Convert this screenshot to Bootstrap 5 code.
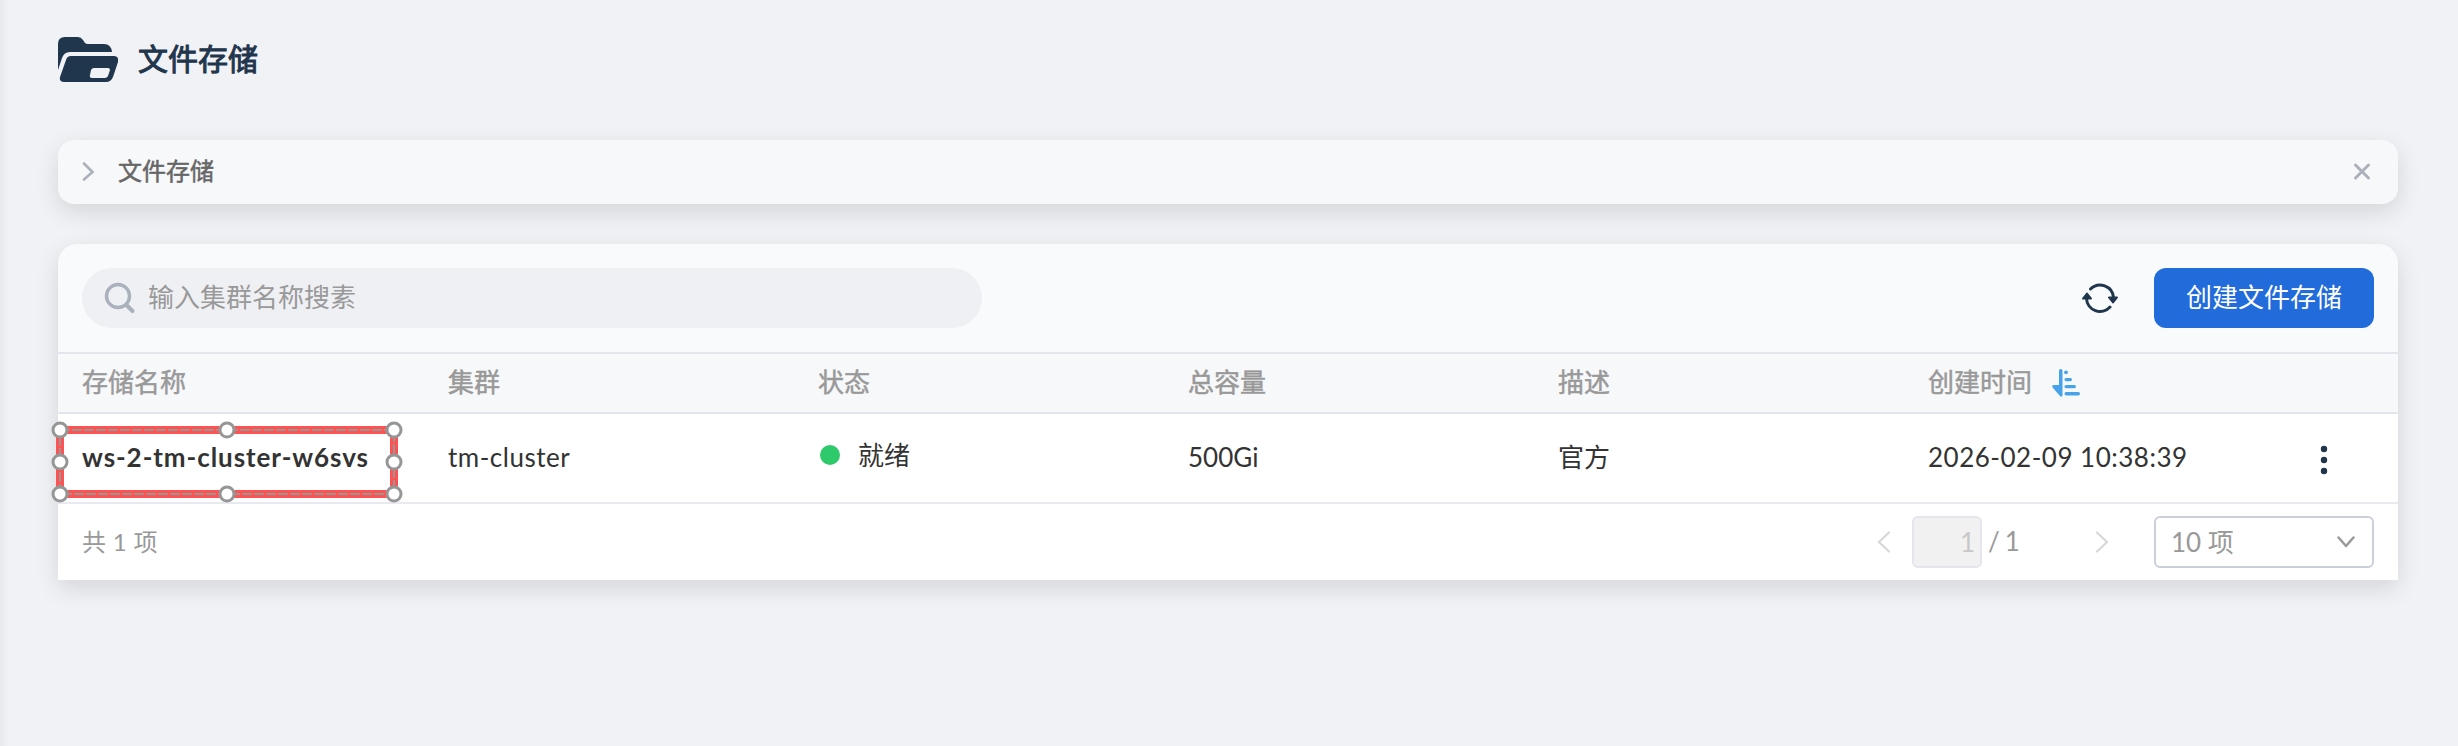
<!DOCTYPE html>
<html lang="zh-CN">
<head>
<meta charset="utf-8">
<meta name="viewport" content="width=device-width, initial-scale=1">
<title>文件存储</title>
<link href="https://cdn.jsdelivr.net/npm/bootstrap@5.3.0/dist/css/bootstrap.min.css" rel="stylesheet">
<style>
  body { background: #f1f2f6 linear-gradient(90deg, #e8e9ed, #f1f2f6) no-repeat 0 0 / 10px 100%; color: #333; font-family: Lato, "Noto Sans CJK SC", sans-serif; font-size: 26px; line-height: 38px; min-height: 746px; }
  svg { display: block; flex: none; }
  .page { padding: 32px 60px 0 58px; }
  .page-title { font-size: 30px; line-height: 44px; color: #1f364d; gap: 20px; height: 56px; }
  .page-title span { padding-bottom: 4px; }
  .medium { -webkit-text-stroke: .5px currentColor; }
  .page-title .medium { -webkit-text-stroke-width: 1px; }
  .tip-bar { height: 64px; margin-top: 52px; padding: 0 26px 0 24px; background: #f7f8fa; border-radius: 16px; box-shadow: 0 8px 24px rgba(0,0,0,.12); font-size: 24px; color: #666; }
  .tip-bar > span { margin-left: 22px; padding-bottom: 2px; }
  .panel { margin-top: 40px; background: #fff; border-radius: 20px 20px 0 0; box-shadow: 0 8px 24px rgba(0,0,0,.12); }
  .toolbar { height: 110px; padding: 0 24px; background: #f9fafc; border-bottom: 2px solid #e4e6ed; border-radius: 20px 20px 0 0; }
  .search { width: 900px; height: 60px; padding-left: 22px; background: #eff0f4; color: #999; gap: 12px; }
  .search span { padding-bottom: 2px; }
  .btn-create { width: 220px; height: 60px; border-radius: 12px; background: #216bdb; color: #fff; font-size: 26px; line-height: 38px; padding: 0 0 2px; }
  .cells { display: grid; grid-template-columns: 366px 370px 370px 370px 370px 1fr 62px; padding: 0 24px; align-items: center; }
  .cells-head { height: 60px; background: #f7f8fa; border-bottom: 2px solid #e2e5ec; color: #999; }
  .cells-head .medium { padding-bottom: 2px; }
  .cells-body { height: 90px; border-bottom: 2px solid #e9eaf0; letter-spacing: .5px; }
  .cells-body > span { padding-bottom: 2px; }
  .cells-body strong { letter-spacing: .93px; padding-bottom: 2px; }
  .cells-body .han { letter-spacing: 0; }
  .state-dot { width: 20px; height: 20px; background: #2dc96b; }
  .cells-body .state { gap: 18px; padding: 0 0 6px 2px; }
  .foot { height: 76px; padding: 0 24px; font-size: 24px; color: #999; }
  .foot > span:first-child { padding-bottom: 1px; letter-spacing: .3px; }
  .page-no { width: 70px; height: 52px; background: #f1f1f1; border: 2px solid #e3e6ec; border-radius: 6px; color: #c8c8c8; padding-right: 5px; font-size: 26px; }
  .page-total { margin-left: 6px; width: 106px; font-size: 26px; letter-spacing: -.8px; padding-bottom: 2px; }
  .size-select { width: 220px; height: 52px; border: 2px solid #cbcfd9; border-radius: 6px; padding: 0 17px 0 15px; font-size: 26px; }
  .selection { left: -8px; top: 4px; }
</style>
</head>
<body>
<main class="page">
  <h1 class="page-title d-flex align-items-center m-0 fw-normal">
    <svg width="60" height="46" viewBox="0 0 60 46" fill="#1f364d">
      <path d="M0 33V7Q0 0 7 0H20Q23 0 25 3L27 6Q28 7 30 7H46Q53 7 54 15H12Q6 15 4 21Z"/>
      <path fill-rule="evenodd" d="M13 19H56Q61 19 60 25L55 40Q53 45 48 45H6Q1 45 2 40L8 23Q9 19 13 19ZM36 31Q34 31 33 33L32 38Q31 41 34 41H47Q49 41 50 39L52 33Q52 31 50 31Z"/>
    </svg>
    <span class="medium">文件存储</span>
  </h1>

  <section class="tip-bar d-flex align-items-center">
    <svg width="14" height="20" viewBox="0 0 14 20" fill="none" stroke="#aab1ba" stroke-width="2.600" stroke-linecap="round"><path d="M2 1.500l8.500 8.500L2 17.500"/></svg>
    <span class="medium">文件存储</span>
    <svg class="ms-auto" width="20" height="20" viewBox="0 0 20 20" stroke="#aab1ba" stroke-width="3" stroke-linecap="round"><path d="M3.500 3l13 13M16.500 3l-13 13"/></svg>
  </section>

  <section class="panel">
    <div class="toolbar d-flex align-items-center">
      <div class="search rounded-pill d-flex align-items-center">
        <svg width="32" height="32" viewBox="0 0 32 32" fill="none" stroke="#a9b2bc"><circle cx="14" cy="14" r="11.500" stroke-width="3.400"/><path d="M22.500 23l6 6" stroke-width="4" stroke-linecap="round"/></svg>
        <span>输入集群名称搜素</span>
      </div>
      <svg class="ms-auto" width="36" height="32" viewBox="0 0 36 32" fill="none" stroke="#1f364d" stroke-width="3" stroke-linecap="round" style="margin-right:36px">
        <path d="M8.500 7A13.500 13.500 0 0 1 31.500 15.500M28 25A13.500 13.500 0 0 1 4.500 16.500"/>
        <path d="M27 15.500h8l-4 5zM1 16.500h8L5 11.500z" fill="#1f364d" stroke-width="2" stroke-linejoin="round"/>
      </svg>
      <button class="btn btn-create" type="button">创建文件存储</button>
    </div>

    <div class="cells cells-head">
      <span class="medium">存储名称</span>
      <span class="medium">集群</span>
      <span class="medium">状态</span>
      <span class="medium">总容量</span>
      <span class="medium">描述</span>
      <span class="d-flex align-items-center"><span class="medium">创建时间</span>
        <svg width="28" height="28" viewBox="0 0 28 28" fill="#47a3e9" style="margin-left:20px"><path d="M7 1.500Q7 0 8.700 0T10.500 1.500V26.500Q10 28.500 8 27L.6 18.500Q-.7 16 2 16H7Z"/><circle cx="14" cy="3.300" r="1.900"/><rect x="12.500" y="9" width="7.500" height="3.200" rx="1.600"/><rect x="12.500" y="16" width="11.500" height="3.200" rx="1.600"/><rect x="12.500" y="23" width="15.500" height="3.400" rx="1.700"/></svg>
      </span>
      <span></span>
    </div>

    <div class="cells cells-body position-relative">
      <strong class="fw-bold">ws-2-tm-cluster-w6svs</strong>
      <span>tm-cluster</span>
      <span class="state han d-flex align-items-center"><i class="state-dot rounded-circle"></i>就绪</span>
      <span class="han">500Gi</span>
      <span class="han">官方</span>
      <span>2026-02-09 10:38:39</span>
      <svg width="24" height="34" viewBox="0 0 24 34" fill="#1f364d"><circle cx="12" cy="8" r="3.200"/><circle cx="12" cy="19" r="3.200"/><circle cx="12" cy="30" r="3.200"/></svg>
      <svg class="selection position-absolute" width="356" height="88" viewBox="50 418 356 88" fill="none">
        <rect x="60" y="430" width="334" height="64" stroke="#ff5252" stroke-width="8"/>
        <rect x="60" y="430" width="334" height="64" stroke="#969696" stroke-width="2" stroke-dasharray="10 2"/>
        <g fill="#fff" stroke="#969696" stroke-width="3"><circle cx="60" cy="430" r="7"/><circle cx="227" cy="430" r="7"/><circle cx="394" cy="430" r="7"/><circle cx="60" cy="462" r="7"/><circle cx="394" cy="462" r="7"/><circle cx="60" cy="494" r="7"/><circle cx="227" cy="494" r="7"/><circle cx="394" cy="494" r="7"/></g>
      </svg>
    </div>

    <div class="foot d-flex align-items-center">
      <span>共 1 项</span>
      <svg class="ms-auto" width="16" height="24" viewBox="0 0 16 24" fill="none" stroke="#d8d8d8" stroke-width="2.200" stroke-linecap="round" style="margin-right:20px"><path d="M13 2.500L3 12l10 9.500"/></svg>
      <span class="page-no d-flex align-items-center justify-content-end">1</span>
      <span class="page-total">/ 1</span>
      <svg width="16" height="24" viewBox="0 0 16 24" fill="none" stroke="#d8d8d8" stroke-width="2.200" stroke-linecap="round" style="margin-right:44px"><path d="M3 2.500L13 12L3 21.500"/></svg>
      <span class="size-select d-flex align-items-center justify-content-between">10 项
        <svg width="18" height="12" viewBox="0 0 18 12" fill="none" stroke="#999" stroke-width="2.500" stroke-linecap="round" stroke-linejoin="round"><path d="M1.500 1.500L9 10l7.500-8.500"/></svg>
      </span>
    </div>
  </section>
</main>
<script src="https://cdn.jsdelivr.net/npm/bootstrap@5.3.0/dist/js/bootstrap.bundle.min.js"></script>
</body>
</html>
